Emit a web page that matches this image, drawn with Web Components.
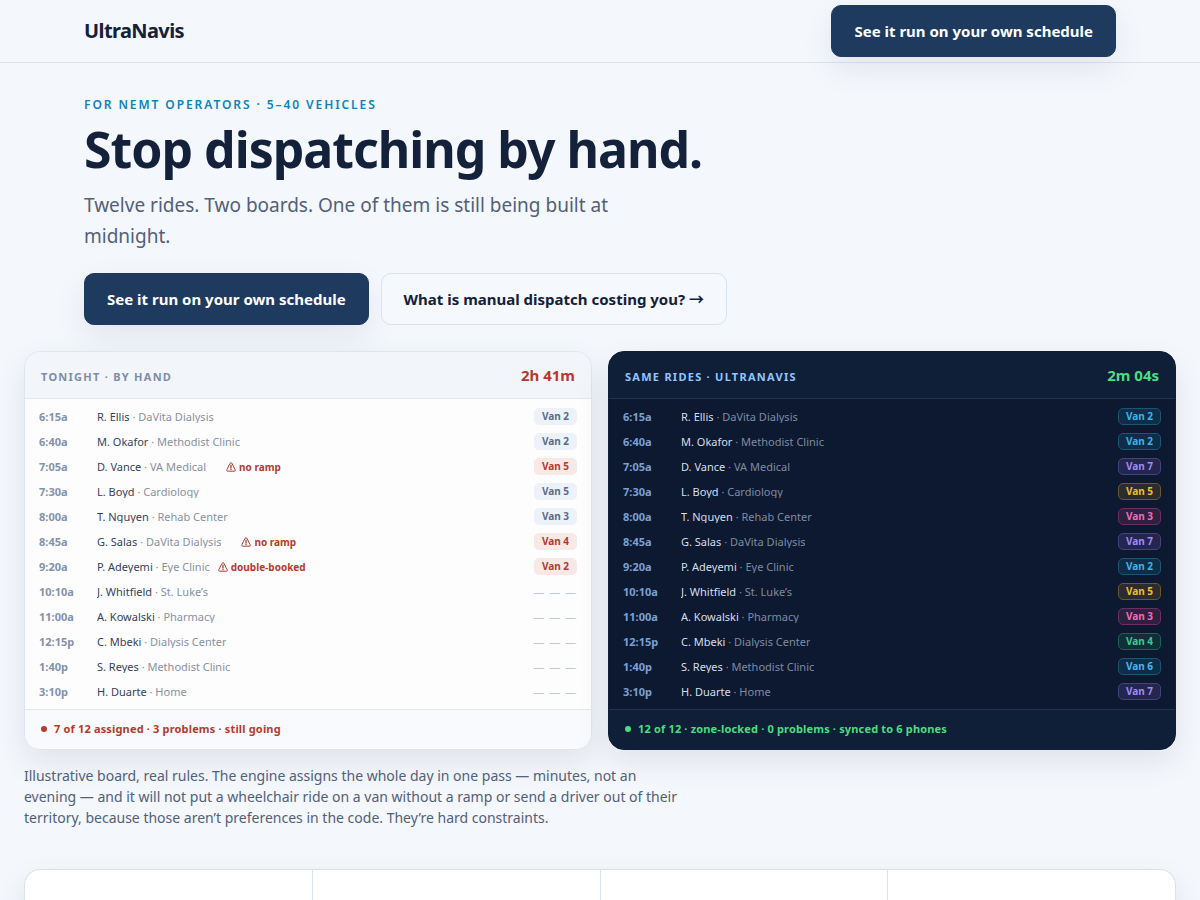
<!DOCTYPE html>
<html lang="en">
<head>
<meta charset="utf-8">
<meta name="viewport" content="width=device-width, initial-scale=1">
<title>UltraNavis</title>
<style>
  body {
    margin: 0;
    overflow-x: hidden;
    background: #f4f7fc;
    color: #14213a;
    font-family: "Noto Sans", sans-serif;
    font-size: 16px;
  }
  .arrow { font-family: "Noto Sans CJK JP", sans-serif; }
</style>
</head>
<body>
<un-header>
  <un-link href="#demo">See it run on your own schedule</un-link>
</un-header>
<main>
  <un-hero>
    <span slot="eyebrow">FOR NEMT OPERATORS · 5–40 VEHICLES</span>
    <span slot="title">Stop dispatching by hand.</span>
    <span slot="lead">Twelve rides. Two boards. One of them is still being built at midnight.</span>
    <un-link href="#demo">See it run on your own schedule</un-link>
    <un-link href="#cost" variant="ghost">What is manual dispatch costing you? <span class="arrow">→</span></un-link>
  </un-hero>
  <un-compare>
    <un-board data-board="hand">
      <span slot="title">TONIGHT · BY HAND</span>
      <span slot="clock">2h 41m</span>
      <span slot="status">7 of 12 assigned · 3 problems · still going</span>
    </un-board>
    <un-board data-board="auto" theme="dark">
      <span slot="title">SAME RIDES · ULTRANAVIS</span>
      <span slot="clock">2m 04s</span>
      <span slot="status">12 of 12 · zone-locked · 0 problems · synced to 6 phones</span>
    </un-board>
    <span slot="note">Illustrative board, real rules. The engine assigns the whole day in one pass — minutes, not an evening — and it will not put a wheelchair ride on a van without a ramp or send a driver out of their territory, because those aren’t preferences in the code. They’re hard constraints.</span>
  </un-compare>
  <un-stats></un-stats>
</main>
<script>
const RIDES = [
  { time: "6:15a", rider: "R. Ellis", place: "DaVita Dialysis", hand: 2, auto: 2 },
  { time: "6:40a", rider: "M. Okafor", place: "Methodist Clinic", hand: 2, auto: 2 },
  { time: "7:05a", rider: "D. Vance", place: "VA Medical", hand: 5, auto: 7, issue: "no ramp", wide: true },
  { time: "7:30a", rider: "L. Boyd", place: "Cardiology", hand: 5, auto: 5 },
  { time: "8:00a", rider: "T. Nguyen", place: "Rehab Center", hand: 3, auto: 3 },
  { time: "8:45a", rider: "G. Salas", place: "DaVita Dialysis", hand: 4, auto: 7, issue: "no ramp", wide: true },
  { time: "9:20a", rider: "P. Adeyemi", place: "Eye Clinic", hand: 2, auto: 2, issue: "double-booked" },
  { time: "10:10a", rider: "J. Whitfield", place: "St. Luke’s", auto: 5 },
  { time: "11:00a", rider: "A. Kowalski", place: "Pharmacy", auto: 3 },
  { time: "12:15p", rider: "C. Mbeki", place: "Dialysis Center", auto: 4 },
  { time: "1:40p", rider: "S. Reyes", place: "Methodist Clinic", auto: 6 },
  { time: "3:10p", rider: "H. Duarte", place: "Home", auto: 7 }
];

class Base extends HTMLElement {
  connectedCallback() {
    if (this.shadowRoot) return;
    this.attachShadow({ mode: "open" }).innerHTML =
      `<style>:host,*{box-sizing:border-box}${this.css()}</style>${this.html()}`;
  }
}

customElements.define("un-link", class extends Base {
  css() { return `
    :host { display: block; }
    a {
      display: flex; align-items: center; height: 52px; padding: 0 22px;
      border: 1px solid #1e3a5f; border-radius: 10px;
      background: #1e3a5f; color: #fff; white-space: nowrap;
      font-size: 15px; font-weight: 700; line-height: 20px; text-decoration: none;
      box-shadow: 0 12px 32px rgba(20, 33, 58, .08);
    }
    :host([variant="ghost"]) a {
      border-color: #d9e2ef; background: #f5f8fc; color: #14213a; box-shadow: none;
    }`; }
  html() { return `<a href="${this.getAttribute("href")}"><span><slot></slot></span></a>`; }
});

customElements.define("un-header", class extends Base {
  css() { return `
    :host { display: block; border-bottom: 1px solid #d9e2ef; }
    header {
      display: flex; align-items: center; justify-content: space-between;
      height: 62px; max-width: 1080px; margin: 0 auto; padding: 0 24px;
    }
    .brand { padding-bottom: 2px; color: #14213a; font-size: 20px; font-weight: 700; text-decoration: none; letter-spacing: -.03em; }`; }
  html() { return `<header><a class="brand" href="#">UltraNavis</a><slot></slot></header>`; }
});

customElements.define("un-hero", class extends Base {
  css() { return `
    :host { display: block; max-width: 1080px; margin: 0 auto; padding: 32px 24px 26px; }
    .eyebrow { margin: 0; color: #0e83bd; font-size: 12px; font-weight: 600; line-height: 20px; letter-spacing: .16em; }
    h1 { margin: 5px 0 12px; font-size: 50px; font-weight: 700; line-height: 58px; letter-spacing: -.02em; }
    .lead { margin: 0 0 21px; max-width: 560px; color: #526079; font-size: 19px; line-height: 31px; }
    .actions { display: flex; flex-wrap: wrap; gap: 12px; }`; }
  html() { return `
    <p class="eyebrow"><slot name="eyebrow"></slot></p>
    <h1><slot name="title"></slot></h1>
    <p class="lead"><slot name="lead"></slot></p>
    <div class="actions"><slot></slot></div>`; }
});

customElements.define("un-compare", class extends Base {
  css() { return `
    :host { display: block; max-width: 1280px; margin: 0 auto; padding: 0 24px; }
    .boards { display: grid; grid-template-columns: 1fr 1fr; gap: 16px; }
    p { margin: 15px 0 41px; max-width: 660px; color: #526079; font-size: 14px; line-height: 21px; }`; }
  html() { return `<div class="boards"><slot></slot></div><p><slot name="note"></slot></p>`; }
});

customElements.define("un-chip", class extends Base {
  css() { return `
    :host { display: inline-block; --ink: #5b6b86; --fill: #edf1f9; --line: #edf1f9; }
    :host([tone="bad"]) { --ink: #b53a2e; --fill: #f8e8e6; --line: #f8e8e6; }
    :host([tone="v2"]) { --ink: #38b6e8; --fill: #0e2d48; --line: #1b5571; }
    :host([tone="v6"]) { --ink: #4cb4f5; --fill: #0e2d48; --line: #1b5571; }
    :host([tone="v7"]) { --ink: #a08bf2; --fill: #23264f; --line: #45427a; }
    :host([tone="v5"]) { --ink: #eec02e; --fill: #2c2c2e; --line: #66592a; }
    :host([tone="v3"]) { --ink: #ee6db2; --fill: #2d2142; --line: #6b2f60; }
    :host([tone="v4"]) { --ink: #3acb95; --fill: #0f3038; --line: #1d6253; }
    span {
      display: block; padding: 0 7px; border: 1px solid var(--line); border-radius: 5px;
      background: var(--fill); color: var(--ink);
      font-size: 10px; font-weight: 700; line-height: 15px;
    }`; }
  html() { return `<span><slot></slot></span>`; }
});

customElements.define("un-issue", class extends Base {
  css() { return `
    :host { display: flex; align-items: center; gap: 3px; margin-left: 8px; padding-top: 1px; color: #b53a2e; font-size: 10px; font-weight: 700; line-height: 16px; }
    :host([wide]) { margin-left: 20px; }
    svg { display: block; }`; }
  html() { return `
    <svg width="10" height="10" viewBox="0 0 10 10" fill="none" stroke="currentColor" stroke-linejoin="round" stroke-linecap="round" aria-hidden="true">
      <path d="M4.2 1.1Q5 0 5.8 1.1L9.2 7.8Q9.7 9.2 8.4 9.2H1.6Q.3 9.2 .8 7.8Z" stroke-width="1"/>
      <path d="M5 3.2V6M5 7.3V7.6" stroke-width="1.3"/>
    </svg><slot></slot>`; }
});

customElements.define("un-board", class extends Base {
  css() { return `
    :host {
      display: block; overflow: hidden; border: 1px solid var(--edge); border-radius: 16px;
      background: var(--body); box-shadow: 0 12px 32px rgba(20, 33, 58, .09);
      --edge: #dfe5ef; --body: #fdfdfe; --bar: #f2f5fa; --foot: #f8fafd; --rule: #e1e7f0;
      --label: #7e8da6; --clock: #b53a2e; --time: #8492aa; --rider: #35425a; --place: #8891a1;
    }
    :host([theme="dark"]) {
      --edge: #0f1f38; --body: #0d1930; --bar: #0f1f38; --foot: #0f1f38; --rule: #22334e;
      --label: #93c5fd; --clock: #4ade80; --time: #7ba0d4; --rider: #d5deec; --place: #7f8ba1;
    }
    header, footer { display: flex; align-items: center; padding: 0 16px; }
    header { justify-content: space-between; height: 47px; background: var(--bar); border-bottom: 1px solid var(--rule); }
    h2 { margin: 0; padding-top: 3px; color: var(--label); font-size: 11px; font-weight: 700; letter-spacing: .115em; }
    .clock { color: var(--clock); font-size: 15px; font-weight: 700; }
    .rows { padding: 5px 14px; }
    table { width: 100%; border-collapse: collapse; table-layout: fixed; }
    td, th { height: 25px; padding: 0; text-align: left; vertical-align: middle; font-size: 11px; line-height: 16px; }
    th { width: 58px; color: var(--time); font-weight: 700; }
    td:last-child { width: 60px; text-align: right; }
    .ride { display: flex; align-items: center; color: var(--place); white-space: nowrap; }
    .who { overflow: hidden; line-height: 13px; }
    b { color: var(--rider); font-weight: 400; }
    un-chip { display: block; width: max-content; margin-left: auto; }
    .open { color: #c0c8d4; letter-spacing: 1px; }
    footer { gap: 7px; height: 40px; padding-bottom: 2px; background: var(--foot); border-top: 1px solid var(--rule); color: var(--clock); font-size: 11px; font-weight: 700; letter-spacing: .015em; }
    i { width: 6px; height: 6px; border-radius: 50%; background: currentColor; }`; }
  html() {
    const board = this.dataset.board;
    const rows = RIDES.map(r => {
      const byHand = board === "hand";
      const issue = byHand && r.issue ? `<un-issue${r.wide ? " wide" : ""}>${r.issue}</un-issue>` : "";
      const tone = byHand ? (r.issue ? "bad" : "plain") : "v" + r.auto;
      const van = r[board] ? `<un-chip tone="${tone}">Van ${r[board]}</un-chip>` : `<span class="open">— — —</span>`;
      return `<tr><th scope="row">${r.time}</th><td><div class="ride"><span class="who"><b>${r.rider}</b> · ${r.place}</span>${issue}</div></td><td>${van}</td></tr>`;
    }).join("");
    return `
      <header><h2><slot name="title"></slot></h2><span class="clock"><slot name="clock"></slot></span></header>
      <div class="rows"><table><tbody>${rows}</tbody></table></div>
      <footer><i></i><slot name="status"></slot></footer>`;
  }
});

customElements.define("un-stats", class extends Base {
  css() { return `
    :host { display: block; max-width: 1280px; margin: 0 auto; padding: 0 24px; }
    div { display: grid; grid-template-columns: repeat(4, 1fr); gap: 1px; overflow: hidden; border: 1px solid #d9e0ea; border-radius: 16px; background: #d9e0ea; box-shadow: 0 12px 32px rgba(20, 33, 58, .09); }
    section { min-height: 120px; background: #fff; }`; }
  html() { return `<div><section></section><section></section><section></section><section></section></div>`; }
});
</script>
</body>
</html>
